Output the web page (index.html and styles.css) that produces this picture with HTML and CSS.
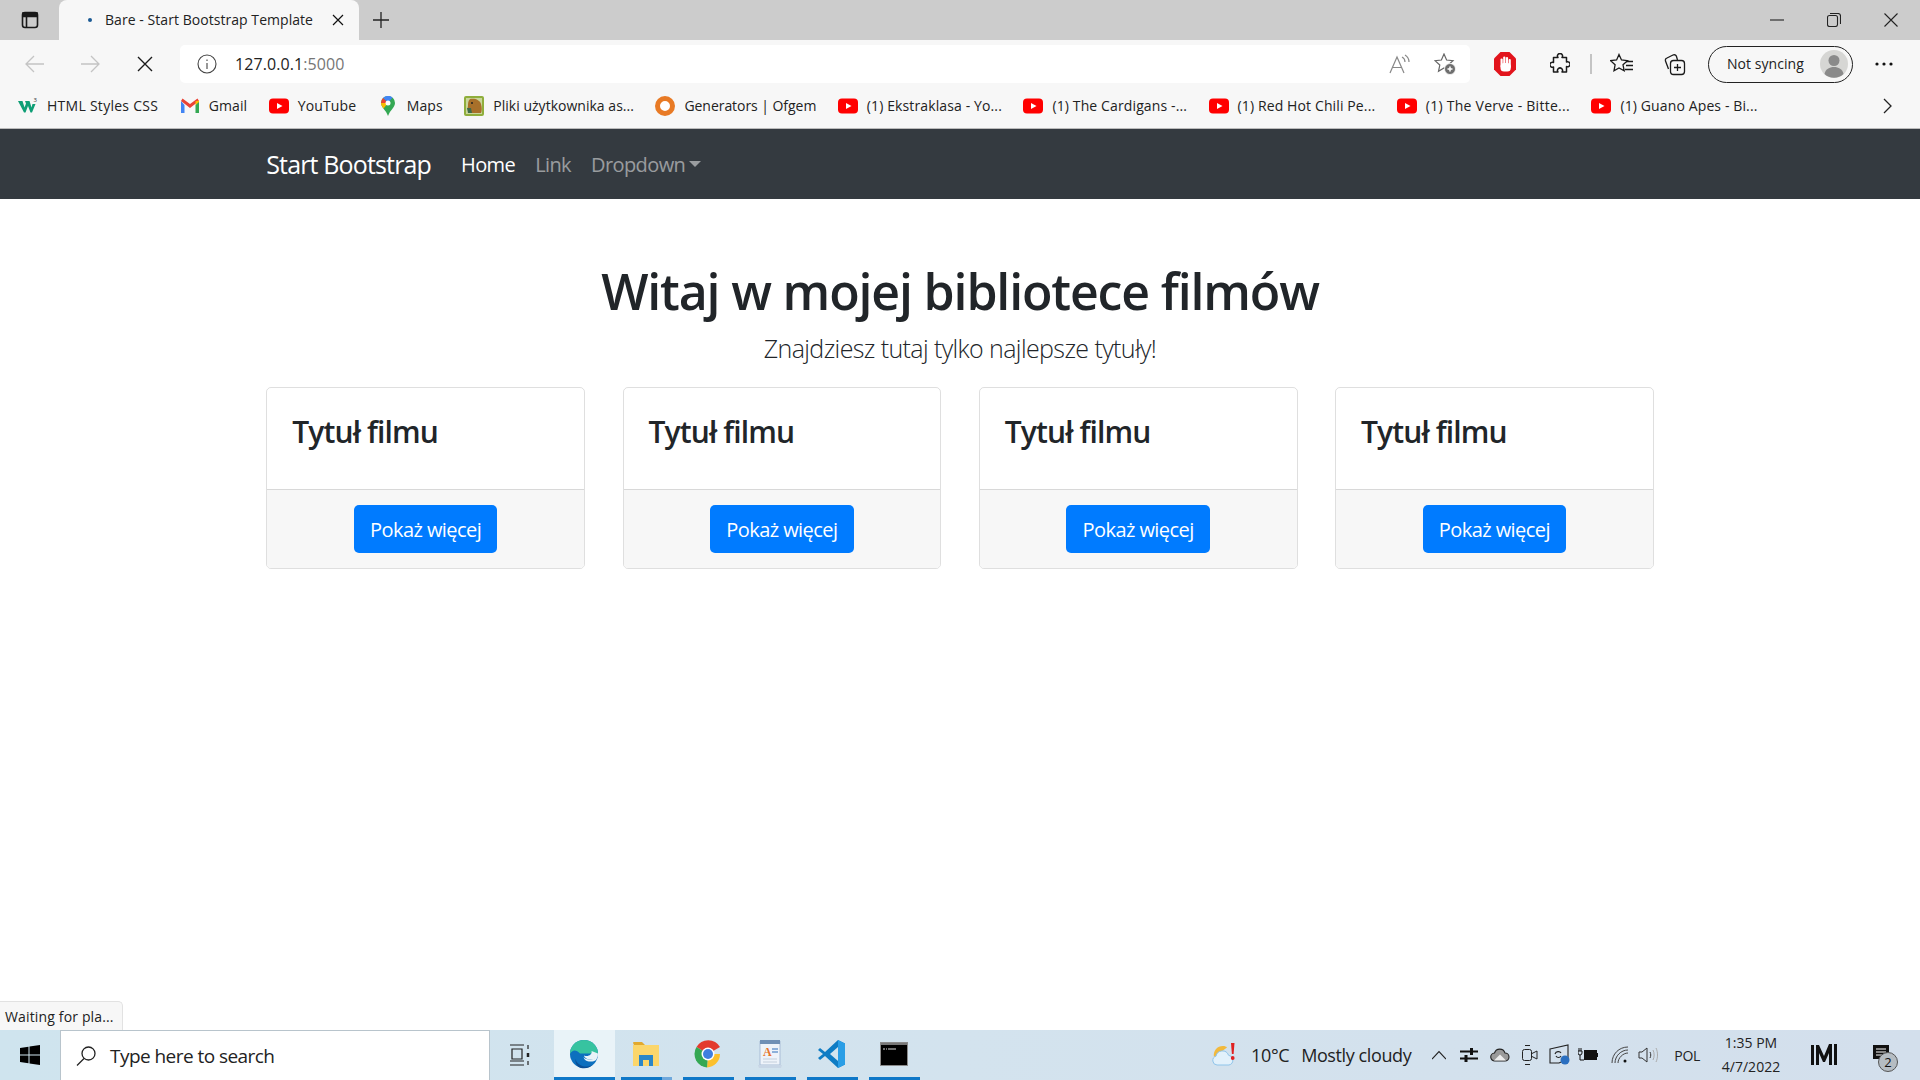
FILE: index.html
```html
<!DOCTYPE html>
<html>
<head>
  <meta charset="UTF-8">
  <title>Bare - Start Bootstrap Template</title>
  <link rel="stylesheet" href="styles.css">
</head>
<body>
  <svg class="defs" width="0" height="0">
    <symbol id="yt" viewBox="0 0 20 20">
      <rect y="2.5" width="20" height="15" rx="4" fill="#f00"/>
      <path d="M8 7l5.500 3L8 13z" fill="#fff"/>
    </symbol>
  </svg>

  <!-- browser chrome -->
  <div class="tabstrip">
    <div class="tab-side">
      <svg width="20" height="20" viewBox="0 0 20 20" fill="none" stroke="#1a1a1a" stroke-width="1.6"><rect x="2.500" y="2.500" width="15" height="15" rx="2.500"/><path d="M6.500 6.500v11"/><path d="M3 3h14v3.500H3z" fill="#1a1a1a"/></svg>
    </div>
    <div class="tab">
      <span class="tab-dot"></span>
      <span class="tab-title">Bare - Start Bootstrap Template</span>
      <svg class="tab-close" width="12" height="12" viewBox="0 0 12 12" stroke="#111" stroke-width="1.2"><path d="M1 1l10 10M11 1L1 11"/></svg>
    </div>
    <svg class="tab-new" width="20" height="20" viewBox="0 0 20 20" stroke="#222" stroke-width="1.3"><path d="M10 2v16M2 10h16"/></svg>
    <div class="win-btns">
      <svg width="14" height="14" viewBox="0 0 14 14" stroke="#222" stroke-width="1.1"><path d="M0 7h14"/></svg>
      <svg width="14" height="14" viewBox="0 0 14 14" fill="none" stroke="#222" stroke-width="1.1"><rect x=".5" y="2.500" width="10" height="11" rx="2"/><path d="M3 .5h8a2.500 2.500 0 0 1 2.500 2.500v8"/></svg>
      <svg width="14" height="14" viewBox="0 0 14 14" stroke="#222" stroke-width="1.1"><path d="M.5.5l13 13M13.500.5L.5 13.500"/></svg>
    </div>
  </div>

  <div class="toolbar">
    <div class="nav-btns">
      <svg width="22" height="22" viewBox="0 0 22 22" fill="none" stroke="#c4c4c4" stroke-width="1.3"><path d="M20 11H2M10 3l-8 8 8 8"/></svg>
      <svg width="22" height="22" viewBox="0 0 22 22" fill="none" stroke="#c4c4c4" stroke-width="1.3"><path d="M2 11h18M12 3l8 8-8 8"/></svg>
      <svg width="18" height="18" viewBox="0 0 18 18" stroke="#1a1a1a" stroke-width="1.4"><path d="M2 2l14 14M16 2L2 16"/></svg>
    </div>
    <div class="addressbar">
      <svg width="20" height="20" viewBox="0 0 20 20" fill="none" stroke="#444" stroke-width="1.1"><circle cx="10" cy="10" r="9"/><path d="M10 9v6M10 5.500v1.500"/></svg>
      <span class="url">127.0.0.1<span class="url-port">:5000</span></span>
      <div class="addr-icons">
        <svg width="22" height="20" viewBox="0 0 22 20" fill="none" stroke="#888" stroke-width="1.2"><path d="M1 19L8 3l7 16M3.500 13.500h9"/><path d="M13 3c2 1 3 3 3 5M16 1c2.500 1.500 4 4 4 7"/></svg>
        <svg width="22" height="22" viewBox="0 0 22 22" fill="none" stroke="#666" stroke-width="1.2"><path d="M10 1l2.600 6 6.400.7-4.800 4.300 1.300 6.300L10 15l-5.500 3.300 1.300-6.300L1 7.700 7.400 7z"/><circle cx="16" cy="16" r="5.500" fill="#6e6e6e" stroke="#fff" stroke-width=".8"/><path d="M16 13.500v5M13.500 16h5" stroke="#fff" stroke-width="1.500"/></svg>
      </div>
    </div>
    <div class="tool-icons">
      <svg class="ti-stop" width="22" height="24" viewBox="0 0 22 24"><path d="M6.500 0h9L22 6.500v11L15.500 24h-9L0 17.500v-11z" fill="#e2141c"/><g fill="#fff"><rect x="6.500" y="6.500" width="2.200" height="9" rx="1.100"/><rect x="9.200" y="4.500" width="2.200" height="10" rx="1.100"/><rect x="11.900" y="5" width="2.200" height="10" rx="1.100"/><rect x="14.600" y="7" width="2.200" height="9" rx="1.100"/><rect x="6.500" y="11" width="10.300" height="8.500" rx="3.500"/></g></svg>
      <svg class="ti-puzzle" width="20" height="23" viewBox="0 0 20 23" fill="none" stroke="#1a1a1a" stroke-width="1.500" stroke-linejoin="round"><path d="M8 4.500a2.500 2.500 0 1 1 4 0h4.500v4.500a2.500 2.500 0 1 1 0 4.500v5.500H12a2.500 2.500 0 1 0-4 0H3.500v-5a2.500 2.500 0 1 1 0-4.500V4.500z"/></svg>
      <span class="ti-sep"></span>
      <svg class="ti-fav" width="24" height="22" viewBox="0 0 24 22" fill="none" stroke="#1a1a1a" stroke-width="1.300"><path d="M9 1.500l2.500 5.500 6 .7-4.500 4.100 1.200 6L9 15l-5 2.800 1.100-6L.6 7.700l6-.7z"/><path d="M16 8.500h7M16 12.500h7M15 16.500h8"/></svg>
      <svg class="ti-coll" width="22" height="24" viewBox="0 0 22 24" fill="none" stroke="#1a1a1a" stroke-width="1.300"><path d="M4.500 17L1.500 9a2.500 2.500 0 0 1 1.500-3l6-3a2.500 2.500 0 0 1 3.500 1.500L13.500 8"/><rect x="6.500" y="8.500" width="14" height="14" rx="3"/><path d="M13.500 12v7M10 15.500h7"/></svg>
      <div class="sync-pill">
        <span>Not syncing</span>
        <svg class="sync-avatar" width="28" height="28" viewBox="0 0 28 28"><circle cx="14" cy="14" r="14" fill="#d6d6d4"/><circle cx="14" cy="10.500" r="5.500" fill="#8a8a8a"/><path d="M4.500 24c1-5 5-7 9.500-7s8.500 2 9.500 7a14 14 0 0 1-19 0z" fill="#8a8a8a"/></svg>
      </div>
      <svg class="ti-dots" width="18" height="4" viewBox="0 0 18 4" fill="#111"><circle cx="2" cy="2" r="1.600"/><circle cx="9" cy="2" r="1.600"/><circle cx="16" cy="2" r="1.600"/></svg>
    </div>
  </div>

  <div class="bookmarks">
    <a class="bm bm-wide">
      <svg width="20" height="20" viewBox="0 0 20 20"><path d="M0 5h4.500l2 6.500L8 7.500 7 5h4.500l2 6.500 1-3.500h3L14 16.500h-1.500L10 10l-2.500 6.500H6z" fill="#0e9e75"/><text x="15.500" y="6" font-size="6" font-family="Open Sans" fill="#333">3</text></svg>
      <span>HTML Styles CSS</span>
    </a>
    <a class="bm">
      <svg width="20" height="20" viewBox="0 0 20 20"><path d="M1 5v12h3.500V9z" fill="#4285f4"/><path d="M15.500 9v8H19V5z" fill="#34a853"/><path d="M1 5l9 7 9-7-1.500-2.500L10 8 2.500 2.500z" fill="#ea4335"/><path d="M15.500 5.200V9L19 6V4.500z" fill="#fbbc04"/></svg>
      <span>Gmail</span>
    </a>
    <a class="bm">
      <svg width="20" height="20"><use href="#yt"/></svg>
      <span>YouTube</span>
    </a>
    <a class="bm">
      <svg width="20" height="20" viewBox="0 0 20 20"><path d="M10 0a7 7 0 0 1 7 7c0 4.500-5 7-7 13-2-6-7-8.500-7-13a7 7 0 0 1 7-7z" fill="#34a853"/><path d="M5 2a7 7 0 0 1 9.500-.5L10 7z" fill="#4285f4"/><path d="M3 7a7 7 0 0 1 2-5l5 5z" fill="#ea4335"/><path d="M3 7c0 2 1 3.500 2.500 5.500L10 7z" fill="#fbbc04"/><circle cx="10" cy="7" r="2.500" fill="#fff"/></svg>
      <span>Maps</span>
    </a>
    <a class="bm bm-tight">
      <svg width="20" height="20" viewBox="0 0 20 20"><rect width="20" height="20" rx="2" fill="#8fae3c"/><rect x="2" y="2" width="16" height="16" fill="#c9d69a"/><path d="M6 3c5-1 10 1 11 5 1 3 1 7 0 9H7c-3-2-4-4-3-7 0-3 0-5 2-7z" fill="#a8702a"/><circle cx="8" cy="7" r="1" fill="#222"/><path d="M3 12h4l1 5H4z" fill="#3f6b4a"/></svg>
      <span>Pliki użytkownika as...</span>
    </a>
    <a class="bm bm-gen">
      <svg width="20" height="20" viewBox="0 0 20 20"><circle cx="10" cy="10" r="7.500" fill="#fff" stroke="#e87a25" stroke-width="5"/></svg>
      <span>Generators | Ofgem</span>
    </a>
    <a class="bm">
      <svg width="20" height="20"><use href="#yt"/></svg>
      <span>(1) Ekstraklasa - Yo...</span>
    </a>
    <a class="bm">
      <svg width="20" height="20"><use href="#yt"/></svg>
      <span>(1) The Cardigans -...</span>
    </a>
    <a class="bm">
      <svg width="20" height="20"><use href="#yt"/></svg>
      <span>(1) Red Hot Chili Pe...</span>
    </a>
    <a class="bm bm-wide">
      <svg width="20" height="20"><use href="#yt"/></svg>
      <span>(1) The Verve - Bitte...</span>
    </a>
    <a class="bm">
      <svg width="20" height="20"><use href="#yt"/></svg>
      <span>(1) Guano Apes - Bi...</span>
    </a>
    <svg class="bm-more" width="10" height="16" viewBox="0 0 10 16" fill="none" stroke="#222" stroke-width="1.300"><path d="M1 1l7 7-7 7"/></svg>
  </div>

  <!-- the page itself -->
  <nav class="navbar">
    <div class="nav-inner">
      <a class="brand">Start Bootstrap</a>
      <a class="nav-link active">Home</a>
      <a class="nav-link">Link</a>
      <a class="nav-link">Dropdown<span class="caret"></span></a>
    </div>
  </nav>

  <main class="page">
    <div class="container">
      <h1>Witaj w mojej bibliotece filmów</h1>
      <p class="lead">Znajdziesz tutaj tylko najlepsze tytuły!</p>
      <div class="cards">
        <div class="card">
          <div class="card-body"><h4 class="card-title">Tytuł filmu</h4></div>
          <div class="card-footer"><a class="btn">Pokaż więcej</a></div>
        </div>
        <div class="card">
          <div class="card-body"><h4 class="card-title">Tytuł filmu</h4></div>
          <div class="card-footer"><a class="btn">Pokaż więcej</a></div>
        </div>
        <div class="card">
          <div class="card-body"><h4 class="card-title">Tytuł filmu</h4></div>
          <div class="card-footer"><a class="btn">Pokaż więcej</a></div>
        </div>
        <div class="card">
          <div class="card-body"><h4 class="card-title">Tytuł filmu</h4></div>
          <div class="card-footer"><a class="btn">Pokaż więcej</a></div>
        </div>
      </div>
    </div>
    <div class="status">Waiting for pla...</div>
  </main>

  <!-- windows taskbar -->
  <footer class="taskbar">
    <div class="start">
      <svg width="20" height="20" viewBox="0 0 20 20" fill="#000"><path d="M0 3l8.500-1.200V9.500H0zM9.500 1.600L20 0v9.500H9.500zM0 10.500h8.500v7.700L0 17zM9.500 10.500H20V20L9.500 18.400z"/></svg>
    </div>
    <div class="search">
      <svg width="22" height="22" viewBox="0 0 22 22" fill="none" stroke="#222" stroke-width="1.300"><circle cx="13.500" cy="8.500" r="6.500"/><path d="M9 13.500L2 20.500"/></svg>
      <span>Type here to search</span>
    </div>
    <div class="taskview">
      <svg width="22" height="22" viewBox="0 0 22 22" fill="none" stroke="#222" stroke-width="1.200"><path d="M1 1h14M1 21h14M1 17h14M3 5h10v10H3z"/><path d="M19 1v4M19 17v4"/><path d="M19 9v4" stroke-width="2.500"/></svg>
    </div>
    <div class="tb-apps">
      <div class="tb-app is-active">
        <svg width="30" height="30" viewBox="0 0 30 30"><circle cx="15" cy="15" r="14" fill="#0c6fbe"/><path d="M1 15C1 7 7 1 15 1c8 0 14 6 14 13.500H11C7 10 3 11 1 15z" fill="#37c3a0"/><path d="M29 14.500c0 4-3 6-7 6-3.500 0-6.500-1.500-7-4 2.500 1 5 .5 6.500-1 1-1 1.500-2 1-3.500z" fill="#e9f3f8"/><path d="M29 15c0 2-1 4.500-2 6-2 1.300-3.500 1.700-6 1.500-3-.2-5.500-1-6.500-4.500 1 1.500 4 3 7.500 2.500 3-.3 6-2 7-5.500z" fill="#e9f3f8"/><path d="M12 29c-4-1-6-5-5.500-9 1 4.500 6 8 12 7.500 2-.2 4-.8 5.500-2-2.500 3-7 4.500-12 3.500z" fill="#0a4f96"/></svg>
      </div>
      <div class="tb-app tb-app-files">
        <svg width="28" height="26" viewBox="0 0 28 26"><path d="M1 2a1 1 0 0 1 1-1h8l3 3H2z" fill="#e2a92d"/><path d="M1 4h26v21H1z" fill="#fbd66b"/><path d="M7 14h14v11h-4v-6h-6v6H7z" fill="#2a86c8"/></svg>
      </div>
      <div class="tb-app">
        <svg width="28" height="28" viewBox="0 0 28 28"><path d="M14 14L2.500 7A13.500 13.500 0 0 1 26 7z" fill="#e33b2e"/><path d="M14 14h12a13.500 13.500 0 0 1-13 13.500z" fill="#fbc02d"/><path d="M14 14l-1 13.500A13.500 13.500 0 0 1 2.500 7z" fill="#34a853"/><circle cx="14" cy="14" r="6.500" fill="#fff"/><circle cx="14" cy="14" r="5" fill="#3f7fe0"/></svg>
      </div>
      <div class="tb-app">
        <svg width="26" height="30" viewBox="0 0 26 30"><path d="M3 2h20v24H3z" fill="#eef3fa" stroke="#a9bdd6"/><path d="M3 1h20v4H3z" fill="#6f8fb5"/><path d="M1 26h24l-1 3H2z" fill="#c8d6e6"/><text x="6" y="17" font-size="12" font-weight="700" font-family="Liberation Serif" fill="#e8742a">A</text><path d="M15 10h6M15 13h6" stroke="#6f9ad0" stroke-width="1.500"/><path d="M6 20h14M6 23h14" stroke="#c4cfdc"/></svg>
      </div>
      <div class="tb-app">
        <svg width="30" height="30" viewBox="0 0 30 30"><path d="M21 1l7 3.500v21L21 29 8 17l-5 4-2-2 5-4-5-4 2-2 5 4z" fill="#0e7cc4"/><path d="M21 1l7 3.500v21L21 29z" fill="#2a9ee6"/><path d="M21 8l-8 7 8 7z" fill="#d3e4ee"/></svg>
      </div>
      <div class="tb-app">
        <svg width="28" height="24" viewBox="0 0 28 24"><rect x=".5" y=".5" width="27" height="23" fill="#000" stroke="#8a8a8a"/><rect x="1" y="1" width="26" height="2" fill="#777"/><path d="M3 7h2M6 7h1M8 7h8" stroke="#ddd"/></svg>
      </div>
    </div>
    <div class="tray">
      <div class="weather">
        <svg width="24" height="26" viewBox="0 0 24 26"><path d="M2 15a9 9 0 0 1 9-11c2 0 3 .5 4 1.500z" fill="#f2b93c"/><path d="M5 23a4.500 4.500 0 0 1-1-8.800 6.500 6.500 0 0 1 12.500-1A5 5 0 0 1 17 23z" fill="#e2f1fb" stroke="#8fc4ea"/><path d="M19 1h3.500l-.9 11h-1.700z" fill="#e02020"/><circle cx="20.700" cy="16" r="1.900" fill="#e02020"/></svg>
        <span class="temp">10°C</span>
        <span class="sky">Mostly cloudy</span>
      </div>
      <div class="tray-icons">
        <svg class="ic-chevron" width="14" height="10" viewBox="0 0 14 10" fill="none" stroke="#222" stroke-width="1.100"><path d="M0 9l7-7.500L14 9"/></svg>
        <svg width="18" height="14" viewBox="0 0 18 14" fill="#111"><path d="M0 2.500h18V4.500H0zM0 9.500h18v2H0z"/><rect x="10" y="0" width="3" height="7"/><rect x="4.500" y="7" width="3" height="7"/></svg>
        <svg class="ic-cloud" width="20" height="14" viewBox="0 0 20 14" stroke="#222" stroke-width="1.100"><path d="M5 13a4 4 0 0 1-.5-8A5.500 5.500 0 0 1 15 5a4 4 0 0 1 0 8z" fill="#9a9a9a"/><path d="M4 12.500l6-6 6 6z" fill="#eee" stroke="none"/></svg>
        <svg class="ic-cam" width="16" height="20" viewBox="0 0 16 20" fill="none" stroke="#222"><rect x=".5" y="4.500" width="9" height="11" rx="2"/><path d="M3 .5h5M3 19.500h5M10 8.500l5-2.500v8l-5-2.500"/></svg>
        <svg width="22" height="22" viewBox="0 0 22 22" fill="none" stroke="#222" stroke-width="1.100"><path d="M1 5l18-4v14l-9 4H1z"/><path d="M6 10c1-3 5-3 6-1M12 12c-1 2-4 2-5 0"/><circle cx="16" cy="16" r="4.500" fill="#2a6fc0" stroke="none"/></svg>
        <svg class="ic-battery" width="20" height="14" viewBox="0 0 20 14"><rect x="6" y="2" width="13" height="10" fill="#111"/><rect x="19" y="5" width="1" height="4" fill="#111"/><path d="M0 3h4V5a2 2 0 0 1-4 0zM1 0v3M3 0v3M2 7v5h4" stroke="#111" fill="none"/></svg>
        <svg class="ic-wifi" width="18" height="18" viewBox="0 0 18 18" fill="none" stroke="#444"><path d="M1 17C1 8 8 1 17 1M4 17C4 10 10 4 17 4M7 17c0-5 5-10 10-10"/><circle cx="14" cy="15" r="1.500" fill="#111" stroke="none"/></svg>
        <svg class="ic-speaker" width="20" height="18" viewBox="0 0 20 18" fill="none" stroke="#333"><path d="M1 6h3l5-4v14l-5-4H1zM12 6c1 2 1 4 0 6"/><path d="M15 4c1.500 3 1.500 7 0 10M18 2c2 4 2 10 0 14" stroke="#aaa"/></svg>
      </div>
      <span class="lang">POL</span>
      <div class="clock"><span>1:35 PM</span><span>4/7/2022</span></div>
      <div class="tray-m">
        <svg width="26" height="22" viewBox="0 0 26 22" fill="#111"><path d="M0 1h3v20H0zM23 0h3v21h-3zM5 1h3l5 11 5-12h3v21h-3V9l-4 9h-2L8 9v12H5z"/></svg>
      </div>
      <div class="notif">
        <svg width="26" height="22" viewBox="0 0 18 22" fill="#111"><path d="M1 1h16v14h-5l-3 3v-3H1z"/><path d="M4 5h10M4 8h10M4 11h10" stroke="#fff"/></svg>
        <span class="notif-count">2</span>
      </div>
    </div>
  </footer>
</body>
</html>
```

FILE: styles.css
```css
html, body {
  margin: 0;
  padding: 0;
  height: 100%;
  overflow: hidden;
}
body {
  display: flex;
  flex-direction: column;
  font-family: "Open Sans", "Noto Sans", sans-serif;
  color: #212529;
  background: #fff;
}
.defs { position: absolute; }
svg { flex: none; display: block; }

/* tab strip */
.tabstrip {
  height: 40px;
  background: #ccc;
  display: flex;
  align-items: flex-end;
  flex: none;
}
.tab-side {
  width: 59px;
  height: 40px;
  display: flex;
  align-items: center;
  justify-content: center;
}
.tab {
  width: 300px;
  height: 40px;
  background: #f7f7f7;
  border-radius: 8px 8px 0 0;
  display: flex;
  align-items: center;
  padding: 0 15px 0 29px;
  box-sizing: border-box;
}
.tab-dot {
  width: 4px;
  height: 4px;
  border-radius: 50%;
  background: #1b5a94;
  margin-right: 13px;
}
.tab-title {
  font-size: 14px;
  letter-spacing: 0.05px;
  color: #222;
  flex: 1;
  white-space: nowrap;
  margin-top: -1px;
}
.tab-new { margin: 0 0 10px 12px; }
.win-btns {
  margin-left: auto;
  height: 40px;
  display: flex;
  align-items: center;
  gap: 43px;
  padding-right: 22px;
}

/* toolbar */
.toolbar {
  height: 43px;
  background: #f7f7f7;
  display: flex;
  align-items: flex-end;
  flex: none;
}
.nav-btns {
  width: 180px;
  height: 38px;
  box-sizing: border-box;
  display: flex;
  align-items: center;
  padding-left: 24px;
  gap: 33px;
}
.nav-btns svg:last-child { margin-left: 2px; }
.addressbar {
  width: 1290px;
  height: 38px;
  background: #fff;
  border-radius: 5px;
  display: flex;
  align-items: center;
  padding-left: 17px;
  box-sizing: border-box;
}
.url {
  margin-left: 18px;
  font-size: 16px;
  letter-spacing: 0.08px;
  color: #222;
}
.url-port { color: #767676; }
.addr-icons {
  margin-left: auto;
  display: flex;
  align-items: center;
  gap: 23px;
  padding-right: 14px;
}
.tool-icons {
  flex: 1;
  height: 38px;
  display: flex;
  align-items: center;
}
.ti-stop { margin-left: 24px; }
.ti-puzzle { margin-left: 34px; }
.ti-sep {
  width: 2px;
  height: 20px;
  background: #c4c4c4;
  margin-left: 20px;
}
.ti-fav { margin-left: 18px; }
.ti-coll { margin-left: 30px; }
.sync-pill {
  width: 145px;
  height: 37px;
  margin-left: 22px;
  box-sizing: border-box;
  border: 1.5px solid #222;
  border-radius: 19px;
  display: flex;
  align-items: center;
  justify-content: space-between;
  padding: 0 4px 0 18px;
  font-size: 14px;
  letter-spacing: 0.05px;
  color: #222;
}
.sync-pill span { margin-top: -2px; }
.ti-dots { margin-left: 22px; }

/* bookmarks */
.bookmarks {
  height: 46px;
  background: #f7f7f7;
  border-bottom: 1px solid #bbb;
  box-sizing: border-box;
  display: flex;
  align-items: center;
  padding-left: 18px;
  gap: 21.5px;
  flex: none;
}
.bm {
  display: flex;
  align-items: center;
  gap: 9px;
  font-size: 14px;
  letter-spacing: 0.12px;
  color: #222;
  white-space: nowrap;
}
.bm-wide { letter-spacing: 0.27px; }
.bm-tight { letter-spacing: 0.02px; }
.bm-gen { letter-spacing: -0.05px; }
.bm-more { margin-left: auto; margin-right: 27px; }

/* navbar */
.navbar {
  height: 70px;
  background: #343a40;
  flex: none;
}
.nav-inner {
  width: 1425px;
  height: 100%;
  margin: 0 auto;
  padding: 0 18.75px;
  box-sizing: border-box;
  display: flex;
  align-items: center;
}
.brand {
  font-size: 25px;
  letter-spacing: -0.85px;
  color: #fff;
  margin-right: 20px;
}
.nav-link {
  font-size: 20px;
  letter-spacing: -0.6px;
  padding: 0 10px;
  color: rgba(255, 255, 255, .5);
  display: flex;
  align-items: center;
}
.nav-link.active { color: #fff; }
.caret {
  width: 0;
  height: 0;
  margin-left: 4px;
  border-top: 6px solid rgba(255, 255, 255, .5);
  border-left: 6px solid transparent;
  border-right: 6px solid transparent;
}

/* content */
.page {
  flex: 1;
  position: relative;
  text-align: center;
}
.container {
  width: 1425px;
  margin: 0 auto;
  padding: 62px 18.75px 0;
  box-sizing: border-box;
}
h1 {
  margin: 0 0 8px;
  font-size: 50px;
  line-height: 60px;
  font-weight: 600;
  letter-spacing: -1.15px;
}
.lead {
  margin: 0 0 20px;
  font-size: 25px;
  line-height: 38px;
  font-weight: 300;
  letter-spacing: -0.6px;
}
.cards {
  display: grid;
  grid-template-columns: repeat(4, 1fr);
  gap: 37.5px;
}
.card {
  border: 1px solid rgba(0, 0, 0, .125);
  border-radius: 5px;
  text-align: left;
  overflow: hidden;
}
.card-body { padding: 26px 25px 24px; }
.card-title {
  margin: 0 0 15px;
  font-size: 30px;
  line-height: 36px;
  font-weight: 600;
  letter-spacing: -0.87px;
}
.card-footer {
  padding: 15px 25px;
  background: #f7f7f7;
  border-top: 1px solid rgba(0, 0, 0, .125);
  text-align: center;
}
.btn {
  display: inline-block;
  height: 48px;
  line-height: 50px;
  padding: 0 16px;
  background: #007bff;
  border-radius: 5px;
  color: #fff;
  font-size: 20px;
  letter-spacing: -0.55px;
  vertical-align: top;
}
.status {
  position: absolute;
  left: 0;
  bottom: 0;
  width: 123px;
  height: 29px;
  box-sizing: border-box;
  background: #f7f7f7;
  border: 1px solid #e2e2e2;
  border-width: 1px 1px 0 0;
  border-radius: 0 5px 0 0;
  padding-left: 5px;
  font-size: 14px;
  line-height: 30px;
  letter-spacing: 0.15px;
  color: #222;
  text-align: left;
}

/* taskbar */
.taskbar {
  height: 50px;
  flex: none;
  background: linear-gradient(90deg, #cfe4ee 0%, #d3e3ee 50%, #d3dfec 100%);
  display: flex;
  align-items: stretch;
}
.start {
  width: 60px;
  display: flex;
  align-items: center;
  justify-content: center;
}
.search {
  width: 430px;
  box-sizing: border-box;
  background: #fff;
  border: 1px solid #b8c4cc;
  border-width: 1px 1px 0;
  display: flex;
  align-items: center;
  padding-left: 14px;
  gap: 13px;
  font-size: 19px;
  letter-spacing: -0.55px;
  color: #222;
}
.taskview {
  width: 64px;
  box-sizing: border-box;
  padding-right: 4px;
  display: flex;
  align-items: center;
  justify-content: center;
}
.tb-apps {
  display: flex;
  gap: 11px;
}
.tb-app {
  width: 51px;
  padding-right: 2px;
  display: flex;
  align-items: center;
  justify-content: center;
  border-bottom: 3px solid #0f78c8;
  box-sizing: border-box;
}
.tb-app.is-active {
  width: 61px;
  background: #e9f3f8;
  margin-right: -5px;
}
.tb-app-files { border-image: linear-gradient(90deg, #0f78c8 80%, #6fa8dc 80%) 1; }
.tray {
  margin-left: auto;
  display: flex;
  align-items: center;
}
.weather {
  display: flex;
  align-items: center;
  font-size: 18px;
  letter-spacing: -0.4px;
  color: #222;
}
.temp { margin-left: 15px; }
.sky { margin-left: 12px; }
.tray-icons {
  display: flex;
  align-items: center;
  gap: 11px;
  margin-left: 21px;
}
.ic-chevron { margin-right: 2.5px; }
.ic-cloud { margin-left: 1px; }
.ic-cam { margin-left: 1.5px; }
.ic-battery { margin-left: -4px; }
.ic-wifi { margin-left: 1.5px; }
.ic-speaker { margin-left: -1.5px; }
.lang {
  margin-left: 16px;
  font-size: 14px;
  letter-spacing: -0.3px;
  color: #222;
}
.clock {
  width: 80px;
  margin-left: 11px;
  display: flex;
  flex-direction: column;
  align-items: center;
  gap: 6px;
  font-size: 14px;
  line-height: 18px;
  letter-spacing: 0;
  color: #222;
}
.tray-m {
  width: 66px;
  display: flex;
  justify-content: center;
}
.notif {
  width: 48px;
  margin-right: 15px;
  position: relative;
  display: flex;
  justify-content: center;
}
.notif-count {
  position: absolute;
  left: 21px;
  top: 8px;
  width: 20px;
  height: 20px;
  border-radius: 50%;
  background: #b5bcc2;
  border: 1px solid #555;
  box-sizing: border-box;
  font-size: 13px;
  line-height: 18px;
  text-align: center;
  color: #111;
}
```
